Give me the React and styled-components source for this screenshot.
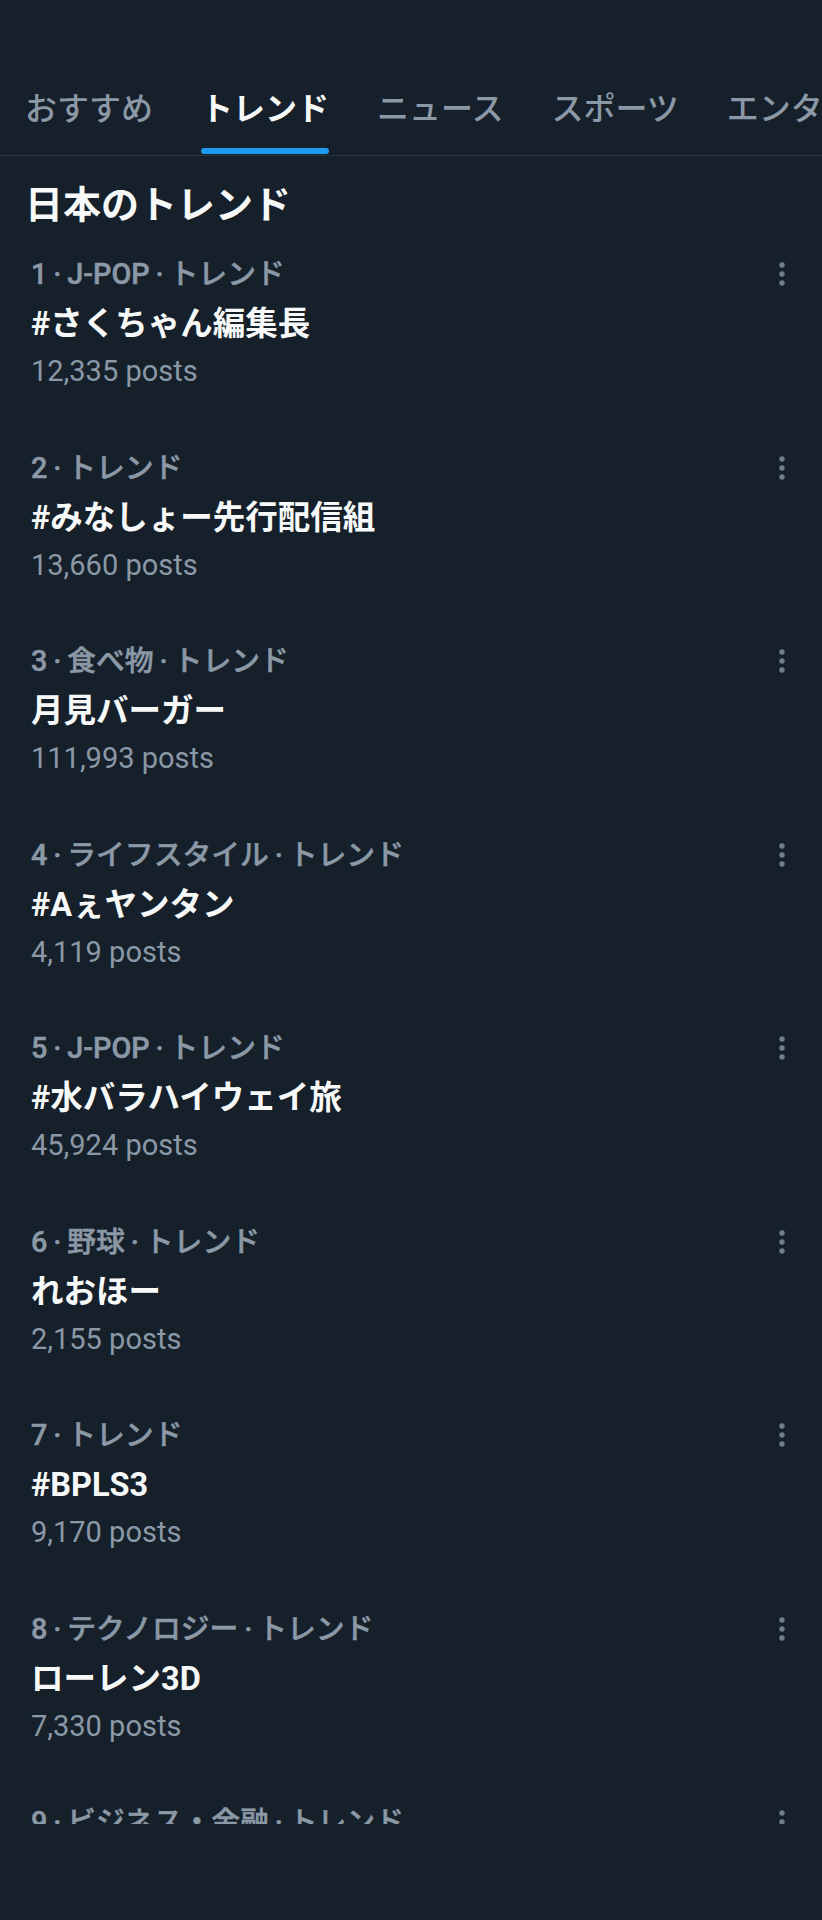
import React from "react";
import styled, { createGlobalStyle } from "styled-components";

const tabs = ["おすすめ", "トレンド", "ニュース", "スポーツ", "エンタメ"];

const trends = [
  { rank: 1, tag: "J-POP", name: "#さくちゃん編集長", posts: "12,335" },
  { rank: 2, tag: null, name: "#みなしょー先行配信組", posts: "13,660" },
  { rank: 3, tag: "食べ物", name: "月見バーガー", posts: "111,993" },
  { rank: 4, tag: "ライフスタイル", name: "#Aぇヤンタン", posts: "4,119" },
  { rank: 5, tag: "J-POP", name: "#水バラハイウェイ旅", posts: "45,924" },
  { rank: 6, tag: "野球", name: "れおほー", posts: "2,155" },
  { rank: 7, tag: null, name: "#BPLS3", posts: "9,170" },
  { rank: 8, tag: "テクノロジー", name: "ローレン3D", posts: "7,330" },
  { rank: 9, tag: "ビジネス・金融", name: "", posts: "" },
];

const GlobalStyle = createGlobalStyle`
  html, body {
    margin: 0;
    padding: 0;
    background: #15202b;
  }
  body {
    font-family: "Roboto", "Noto Sans CJK JP", sans-serif;
    color: #f7f9f9;
  }
`;

const Page = styled.div`
  width: 822px;
  height: 1920px;
  background: #15202b;
  overflow: hidden;
`;

const TabBar = styled.nav`
  height: 155px;
  display: flex;
  align-items: flex-end;
  gap: 48px;
  padding-left: 25px;
  border-bottom: 1px solid #2c3640;
  overflow: hidden;
  white-space: nowrap;
`;

const Tab = styled.div`
  flex-shrink: 0;
  display: flex;
  flex-direction: column;
`;

const TabLabel = styled.span`
  font-size: 32px;
  line-height: 40px;
  font-weight: ${(p) => (p.$active ? 700 : 500)};
  color: ${(p) => (p.$active ? "#f7f9f9" : "#8b98a5")};
  margin-bottom: 19px;
`;

const Indicator = styled.div`
  height: 6px;
  margin-bottom: 1px;
  border-radius: 3px;
  background: ${(p) => (p.$active ? "#1d9bf0" : "transparent")};
`;

const Title = styled.h1`
  margin: 0;
  padding: 25px 25px 0;
  font-size: 38px;
  line-height: 48px;
  font-weight: 700;
  color: #f7f9f9;
`;

const List = styled.div`
  height: 1595px;
  overflow: hidden;
`;

const Row = styled.div`
  height: 193.5px;
  box-sizing: border-box;
  padding: 27px 28px 0 31px;
  display: flex;
  align-items: flex-start;
`;

const Body = styled.div`
  flex: 1;
  display: flex;
  flex-direction: column;
`;

const Meta = styled.div`
  font-size: 28.8px;
  line-height: 36px;
  font-weight: 500;
  color: #8b98a5;
  -webkit-text-stroke: 0.5px #8b98a5;
`;

const Name = styled.div`
  margin-top: 10px;
  font-size: 32.5px;
  line-height: 44px;
  font-weight: 700;
  color: #f7f9f9;
`;

const Posts = styled.div`
  margin-top: 7px;
  font-size: 29px;
  line-height: 36px;
  color: #8b98a5;
`;

const More = styled.svg`
  flex-shrink: 0;
  margin-top: 6px;
  width: 24px;
  height: 24px;
  fill: #71808e;
`;

const MoreIcon = () => (
  <More viewBox="0 0 24 24">
    <circle cx="12" cy="3" r="2.7" />
    <circle cx="12" cy="12" r="2.7" />
    <circle cx="12" cy="21" r="2.7" />
  </More>
);

const TrendRow = ({ item }) => {
  const meta = [item.rank, item.tag, "トレンド"]
    .filter(Boolean)
    .join("\u2009·\u2009");
  return (
    <Row>
      <Body>
        <Meta>{meta}</Meta>
        {item.name && <Name>{item.name}</Name>}
        {item.posts && <Posts>{item.posts} posts</Posts>}
      </Body>
      <MoreIcon />
    </Row>
  );
};

export default function App() {
  return (
    <Page>
      <GlobalStyle />
      <TabBar>
        {tabs.map((t) => (
          <Tab key={t}>
            <TabLabel $active={t === "トレンド"}>{t}</TabLabel>
            <Indicator $active={t === "トレンド"} />
          </Tab>
        ))}
      </TabBar>
      <Title>日本のトレンド</Title>
      <List>
        {trends.map((item) => (
          <TrendRow key={item.rank} item={item} />
        ))}
      </List>
    </Page>
  );
}
